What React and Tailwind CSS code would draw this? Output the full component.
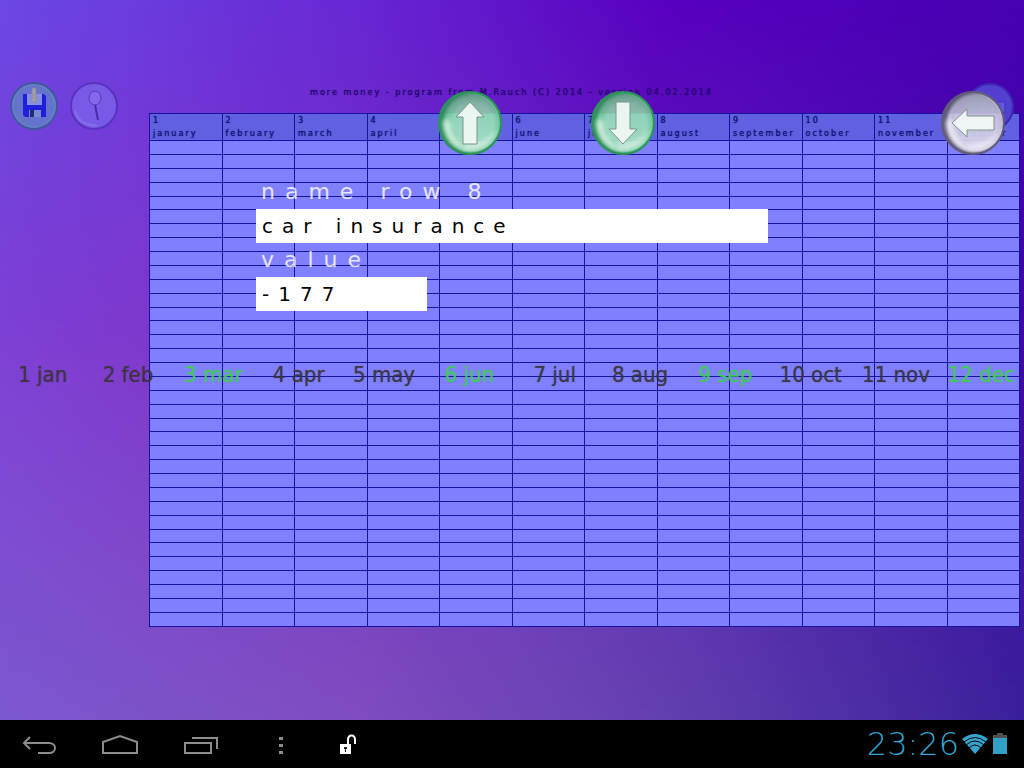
import React, { useState } from "react";

const MONTHS = [
  "january",
  "february",
  "march",
  "april",
  "may",
  "june",
  "july",
  "august",
  "september",
  "october",
  "november",
  "december",
];

const ROWS = Array.from({ length: 35 }, (_, i) => i + 1);

const Backdrop = () => (
  <div className="absolute inset-0" aria-hidden="true">
    <div className="absolute inset-0 bg-[linear-gradient(90deg,#7c58d0_0%,#7f4cc0_35%,#6340b0_65%,#3a209c_100%)]" />
    <div className="absolute inset-0 bg-[linear-gradient(90deg,#7f40d4_0%,#8038cc_15%,#7030c0_50%,#4008a4_100%)] [mask-image:linear-gradient(#000_45%,transparent_100%)]" />
    <div className="absolute inset-0 bg-[linear-gradient(100deg,#6c48e4_0%,#6828d4_30%,#5800c0_58%,#4000ac_100%)] [mask-image:linear-gradient(#000_0%,transparent_50%)]" />
  </div>
);

const Arrow = ({ angle }) => (
  <path
    d="M32 11 46 26H39V53H25V26H18Z"
    transform={`rotate(${angle} 32 32)`}
    fill="#f2f8f5"
    fillOpacity="0.92"
    stroke="#7d9488"
    strokeWidth="1"
  />
);

const GlassButton = ({ id, label, angle, rim, body, edge }) => (
  <button type="button" aria-label={label} className="size-16 shrink-0">
    <svg viewBox="0 0 64 64" className="size-16">
      <defs>
        <radialGradient id={`${id}-body`} cx="0.55" cy="0.5" r="0.5">
          <stop offset="0" stopColor={body} stopOpacity="0.9" />
          <stop offset="0.65" stopColor={body} stopOpacity="0.9" />
          <stop offset="0.88" stopColor={edge} stopOpacity="0.92" />
          <stop offset="1" stopColor={rim} stopOpacity="0.95" />
        </radialGradient>
        <linearGradient id={`${id}-shade`} x1="0" y1="0" x2="0" y2="1">
          <stop offset="0" stopColor="#606c78" stopOpacity="0.4" />
          <stop offset="0.33" stopColor="#707c90" stopOpacity="0.2" />
          <stop offset="0.36" stopColor="#ffffff" stopOpacity="0" />
          <stop offset="1" stopColor="#ffffff" stopOpacity="0.2" />
        </linearGradient>
        <filter id={`${id}-soft`} x="-20%" y="-20%" width="140%" height="140%">
          <feGaussianBlur stdDeviation="2" />
        </filter>
      </defs>
      <circle cx="32" cy="32" r="31" fill={`url(#${id}-body)`} />
      <circle cx="32" cy="32" r="29" fill={`url(#${id}-shade)`} />
      <g fill="#fff" filter={`url(#${id}-soft)`}>
        <path d="M5 32C6 46 15 56 28 60 22 52 13 46 12 32 11 26 6 26 5 32Z" fillOpacity="0.6" />
        <path d="M26 60C44 61 56 52 59 38 52 48 42 53 26 53Z" fillOpacity="0.5" />
      </g>
      <circle cx="32" cy="32" r="31" fill="none" stroke={rim} strokeWidth="2" />
      <Arrow angle={angle} />
    </svg>
  </button>
);

const SaveButton = () => (
  <button type="button" aria-label="save" className="size-12">
    <svg viewBox="0 0 48 48" className="size-12">
      <circle cx="24" cy="24" r="23" fill="#6474cc" stroke="#40589c" strokeWidth="2" />
      <circle cx="24" cy="24" r="21" fill="none" stroke="#6484c0" strokeWidth="2" opacity="0.6" />
      <path d="M13 12H34L36 14V35H15L13 33Z" fill="#2020dc" />
      <path d="M17 12H32V23H17Z" fill="#8890e0" />
      <path d="M19 28H31V35H19Z" fill="#7c88d4" />
      <path d="M20 28H24V35H20Z" fill="#202c70" />
      <path d="M22 6H26V17H28L24 21 20 17H22Z" fill="#a09ca0" stroke="#8080a0" strokeWidth="0.5" />
    </svg>
  </button>
);

const SearchButton = () => (
  <button type="button" aria-label="search" className="size-12">
    <svg viewBox="0 0 48 48" className="size-12">
      <circle cx="24" cy="24" r="23" fill="#785ae6" stroke="#5834bc" strokeWidth="2" />
      <path d="M5 28C7 39 17 44 27 43" fill="none" stroke="#8470ec" strokeWidth="2" />
      <ellipse cx="25" cy="16" rx="6" ry="7" fill="#8468ec" stroke="#5838b8" strokeWidth="1" />
      <path d="M25 23 26 28 28 38" fill="none" stroke="#4c2ca4" strokeWidth="2" />
    </svg>
  </button>
);

const ExitButton = () => (
  <button type="button" aria-label="exit" className="absolute top-[83px] right-[10px] size-12">
    <svg viewBox="0 0 48 48" className="size-12">
      <circle cx="24" cy="24" r="23" fill="#5440d0" stroke="#3c28b4" strokeWidth="2" />
      <path d="M10 24 20 16V19H39V30H20V33Z" fill="#6058e4" stroke="#4030c0" strokeWidth="1" />
    </svg>
  </button>
);

const BudgetTable = () => (
  <table className="h-full w-full table-fixed border-collapse bg-[#8080ff] text-[9px] leading-[13px] text-[#141478]">
    <thead>
      <tr className="h-[27px] bg-[#6060e0]">
        {MONTHS.map((month, i) => (
          <th
            key={month}
            scope="col"
            className="border border-[#1414a0] p-0 pl-[3px] text-left align-top font-normal tracking-[2px] whitespace-nowrap [text-shadow:0_0_1px_currentColor]"
          >
            {i + 1}
            <br />
            {month}
          </th>
        ))}
      </tr>
    </thead>
    <tbody>
      {ROWS.map((row) => (
        <tr key={row}>
          {MONTHS.map((month) => (
            <td key={month} className="border border-[#1414a0] p-0" />
          ))}
        </tr>
      ))}
    </tbody>
  </table>
);

const EntryForm = () => {
  const [name, setName] = useState("car insurance");
  const [value, setValue] = useState("-177");

  return (
    <form
      className="flex flex-col pt-[13px] pl-[25%] font-['DejaVu_Sans',sans-serif]"
      onSubmit={(e) => e.preventDefault()}
    >
      <label
        htmlFor="row-name"
        className="h-[34px] pl-[5px] text-[22px] leading-[34px] tracking-[10px] text-white/80"
      >
        name row 8
      </label>
      <input
        id="row-name"
        type="text"
        value={name}
        onChange={(e) => setName(e.target.value)}
        className="h-[34px] w-2/3 bg-white pl-[6px] text-[20px] tracking-[9px] text-black outline-none"
      />
      <label
        htmlFor="row-value"
        className="h-[34px] pl-[5px] text-[22px] leading-[34px] tracking-[10px] text-white/80"
      >
        value
      </label>
      <input
        id="row-value"
        type="text"
        value={value}
        onChange={(e) => setValue(e.target.value)}
        className="h-[34px] w-2/9 bg-white pl-[6px] text-[20px] tracking-[9px] text-black outline-none"
      />
    </form>
  );
};

const MonthPicker = () => {
  const [selected, setSelected] = useState([2, 5, 8, 11]);

  const toggle = (i) =>
    setSelected((prev) =>
      prev.includes(i) ? prev.filter((m) => m !== i) : [...prev, i],
    );

  return (
    <div className="mt-12 grid grid-cols-12">
      {MONTHS.map((month, i) => (
        <button
          key={month}
          type="button"
          aria-pressed={selected.includes(i)}
          onClick={() => toggle(i)}
          className={`h-8 text-[22px] leading-8 whitespace-nowrap [text-shadow:0_0_1px_currentColor] ${selected.includes(i) ? "text-[#3cd050]/80" : "text-[#38343c]/80"}`}
        >
          {i + 1} {month.slice(0, 3)}
        </button>
      ))}
    </div>
  );
};

const NavBar = () => (
  <footer className="flex h-12 shrink-0 items-center justify-between bg-black">
    <div className="flex items-center pt-px text-[#8c8c8c]">
      <button type="button" aria-label="back" className="flex h-12 w-20 items-center justify-center">
        <svg viewBox="0 0 40 24" className="h-6 w-10" fill="none" stroke="currentColor" strokeWidth="2">
          <path d="M10 4 4 10 10 16M4 10H29C37 10 37 20 29 20H18" />
        </svg>
      </button>
      <button type="button" aria-label="home" className="flex h-12 w-20 items-center justify-center">
        <svg viewBox="0 0 40 24" className="h-6 w-10" fill="none" stroke="currentColor" strokeWidth="2">
          <path d="M3 20V9L20 3 37 9V20Z" />
        </svg>
      </button>
      <button type="button" aria-label="recent apps" className="flex h-12 w-20 items-center justify-center">
        <svg viewBox="0 0 40 24" className="h-6 w-10" fill="none" stroke="currentColor" strokeWidth="2">
          <path d="M5 10H31V20H5ZM12 5H37V16" />
        </svg>
      </button>
      <button type="button" aria-label="menu" className="flex h-12 w-20 items-center justify-center">
        <svg viewBox="0 0 8 24" className="h-6 w-2" fill="currentColor">
          <path d="M3 4H7V7H3ZM3 11H7V14H3ZM3 18H7V21H3Z" />
        </svg>
      </button>
      <svg viewBox="0 0 18 24" className="ml-[18px] h-6 w-[18px]">
        <path d="M2 11H13V21H2Z" fill="#fff" />
        <path d="M10 11V7C10 1 17 1 17 7V11" fill="none" stroke="#fff" strokeWidth="2" />
        <path d="M6 14H9V16H8V19H7V16H6Z" fill="#222" />
      </svg>
    </div>
    <div className="flex items-center pr-[17px] text-[#33a5d0]">
      <time className="font-['DejaVu_Sans'] text-[32px] leading-[48px] font-extralight">
        23:26
      </time>
      <svg viewBox="0 0 28 24" className="ml-[2px] h-6 w-7" fill="currentColor">
        <path d="M1 7Q14 -3 27 7L14 22Z" />
        <g fill="none" stroke="#000" strokeWidth="1">
          <path d="M3 10Q14 1 25 10" />
          <path d="M5 13Q14 5 23 13" />
          <path d="M8 16Q14 10 20 16" />
        </g>
      </svg>
      <svg viewBox="0 0 14 24" className="ml-[4px] h-6 w-[14px]">
        <path d="M4 1H10V3H14V6H0V3H4Z" fill="#505050" />
        <path d="M0 6H14V22H0Z" fill="#33a0c8" />
      </svg>
    </div>
  </footer>
);

export default function App() {
  return (
    <div className="flex h-screen flex-col font-['DejaVu_Sans_Condensed','DejaVu_Sans',sans-serif]">
      <main className="relative min-h-0 flex-1">
        <Backdrop />

        <div className="relative flex h-full pr-1 pb-[93px]">
          <div className="flex w-[149px] shrink-0 gap-3 pt-[82px] pl-[10px]">
            <SaveButton />
            <SearchButton />
          </div>
          <div className="flex min-w-0 flex-1 flex-col pt-[84px]">
            <p className="h-[29px] shrink-0 pl-[161px] text-[9px] leading-4 tracking-[2px] whitespace-nowrap text-[#240870] [text-shadow:0_0_1px_currentColor]">
              more money - program from M.Rauch (C) 2014 - version 04.02.2014
            </p>
            <div className="min-h-0 flex-1">
              <BudgetTable />
            </div>
          </div>
          <ExitButton />
        </div>

        <div className="absolute inset-0 pt-[91px]">
          <div className="flex gap-[89px] pr-[19px] pl-[438px]">
            <GlassButton id="up" label="row up" angle={0} rim="#2c9458" body="#94e0b4" edge="#68cc90" />
            <GlassButton id="down" label="row down" angle={180} rim="#2c9458" body="#94e0b4" edge="#68cc90" />
            <div className="ml-auto">
              <GlassButton id="back" label="close" angle={270} rim="#605c78" body="#d0cce4" edge="#c8c4d8" />
            </div>
          </div>
          <EntryForm />
          <MonthPicker />
        </div>
      </main>
      <NavBar />
    </div>
  );
}
